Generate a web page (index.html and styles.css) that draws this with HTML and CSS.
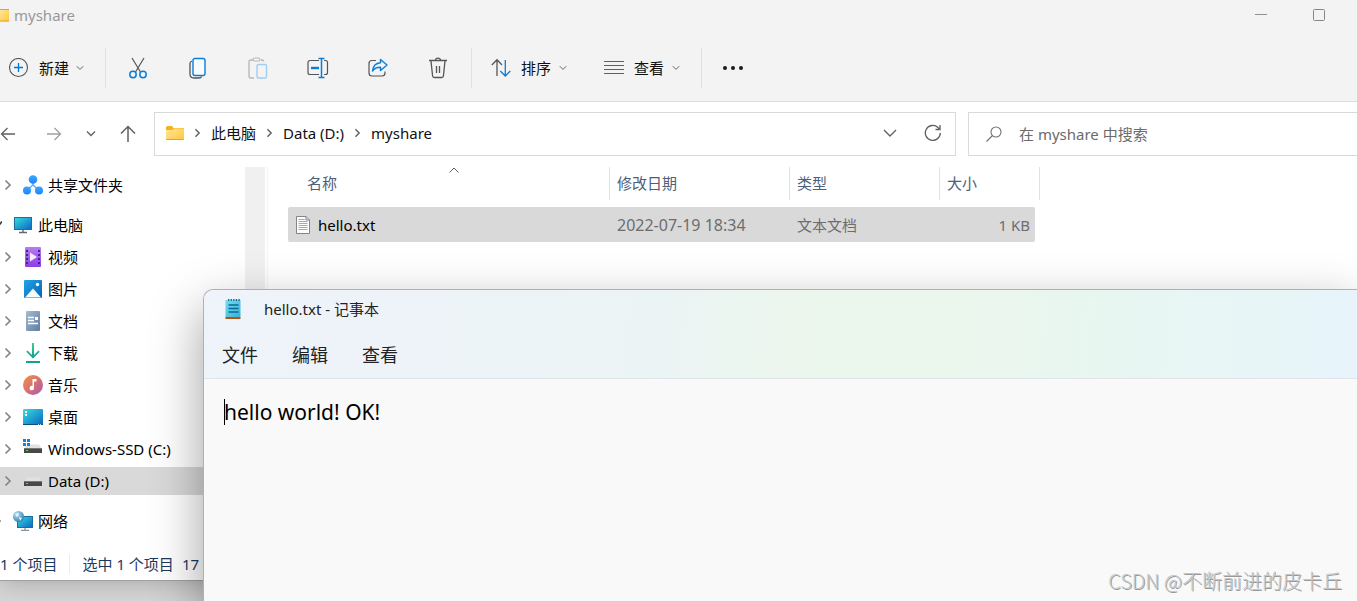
FILE: index.html
```html
<!DOCTYPE html>
<html lang="zh-CN">
<head>
<meta charset="utf-8">
<title>myshare</title>
<link rel="stylesheet" href="styles.css">
</head>
<body>
<svg class="defs" width="0" height="0" aria-hidden="true">
  <defs>
    <linearGradient id="g-folder" x1="0" y1="0" x2="1" y2="1"><stop offset="0" stop-color="#ffe69a"/><stop offset="1" stop-color="#ffc83d"/></linearGradient>
    <linearGradient id="g-screen" x1="0" y1="0" x2="1" y2="1"><stop offset="0" stop-color="#35dde0"/><stop offset="1" stop-color="#0a66c2"/></linearGradient>
    <linearGradient id="g-share" x1="0" y1="0" x2="0" y2="1"><stop offset="0" stop-color="#3ba6ff"/><stop offset="1" stop-color="#1c84ff"/></linearGradient>
    <linearGradient id="g-video" x1="0" y1="0" x2="0" y2="1"><stop offset="0" stop-color="#b77cf2"/><stop offset="1" stop-color="#8a3ee6"/></linearGradient>
    <linearGradient id="g-pic" x1="0" y1="0" x2="1" y2="1"><stop offset="0" stop-color="#1fa5e8"/><stop offset="1" stop-color="#0963b4"/></linearGradient>
    <linearGradient id="g-doc" x1="0" y1="0" x2="1" y2="1"><stop offset="0" stop-color="#a6bbd0"/><stop offset="1" stop-color="#5e7da3"/></linearGradient>
    <linearGradient id="g-down" x1="0" y1="0" x2="0" y2="1"><stop offset="0" stop-color="#36cf94"/><stop offset="1" stop-color="#0a9d94"/></linearGradient>
    <linearGradient id="g-music" x1="0" y1="0" x2="1" y2="1"><stop offset="0" stop-color="#f0954f"/><stop offset=".5" stop-color="#d9706e"/><stop offset="1" stop-color="#a05cc0"/></linearGradient>
    <linearGradient id="g-note" x1="0" y1="0" x2="1" y2="1"><stop offset="0" stop-color="#74dcf3"/><stop offset="1" stop-color="#39b0d8"/></linearGradient>
    <radialGradient id="g-globe" cx=".35" cy=".3" r=".8"><stop offset="0" stop-color="#b9e3f5"/><stop offset="1" stop-color="#2478aa"/></radialGradient>
    <symbol id="chev-r" viewBox="0 0 8 12"><path d="M1.500 1.500 6 6 1.500 10.500" fill="none" stroke="currentColor" stroke-width="1.700"/></symbol>
    <symbol id="chev-d" viewBox="0 0 8 6"><path d="M.8 1.200 4 4.400 7.200 1.200" fill="none" stroke="currentColor"/></symbol>
    <symbol id="drive" viewBox="0 0 20 20"><path d="M4 7.500h12l2.500 4h-17z" fill="#dfe1e4"/><rect x="1" y="11" width="18" height="5" fill="#484848"/><path d="M1 11.500h18" stroke="#777"/><rect x="3" y="13" width="2" height="1" fill="#4be04b"/></symbol>
  </defs>
</svg>

<main class="explorer">
  <header class="chrome">
    <div class="titlebar">
      <svg class="title-icon" viewBox="0 0 9 13"><rect width="9" height="12" y="0.500" fill="url(#g-folder)"/><path d="M0 .5h9M0 12h9" stroke="#e5a41a"/></svg>
      <h1 class="title">myshare</h1>
      <div class="window-buttons">
        <button class="window-button" aria-label="最小化"><svg width="12" height="12"><path d="M0 5.500h12" stroke="#909090"/></svg></button>
        <button class="window-button" aria-label="最大化"><svg width="12" height="12"><rect x=".5" y=".5" width="11" height="11" rx="1" fill="none" stroke="#868686"/></svg></button>
      </div>
    </div>
    <div class="toolbar">
      <button class="command command-new">
        <svg class="icon" viewBox="0 0 20 20" fill="none"><circle cx="9.500" cy="9.500" r="9" stroke="#555" stroke-width="1.100"/><path d="M9.500 5v9M5 9.500h9" stroke="#0078d4" stroke-width="1.300"/></svg>
        <span class="label-new">新建</span><svg class="drop"><use href="#chev-d"/></svg>
      </button>
      <div class="tools">
        <button class="tool" aria-label="剪切"><svg class="icon-lg" viewBox="0 0 22 22" fill="none"><path d="M5 1l8.500 14M17 1 8.500 15" stroke="#555" stroke-width="1.200"/><circle cx="6" cy="17.500" r="3.200" stroke="#0a7ed6" stroke-width="1.500"/><circle cx="16" cy="17.500" r="3.200" stroke="#0a7ed6" stroke-width="1.500"/></svg></button>
        <button class="tool" aria-label="复制"><svg class="icon-lg" viewBox="0 0 22 22" fill="none"><path d="M5 4c-1.200.4-2 1.200-2 2.500V17c0 2.500 1.500 4 4 4h5c1.300 0 2.200-.6 2.600-1.500" stroke="#555" stroke-width="1.300"/><rect x="6" y="1.500" width="12" height="17" rx="2" fill="#f8fbff" stroke="#0a7ed6" stroke-width="1.400"/></svg></button>
        <button class="tool" aria-label="粘贴" disabled><svg class="icon-lg" viewBox="0 0 22 22" fill="none"><path d="M6 3H4a2 2 0 0 0-2 2v14a2 2 0 0 0 2 2h3M14 3h1a1.500 1.500 0 0 1 1.500 1.500" stroke="#b8b8b8" stroke-width="1.400"/><rect x="6" y="1" width="7" height="3" rx="1.500" stroke="#b8b8b8" stroke-width="1.200"/><rect x="10" y="7.500" width="9.500" height="13.500" rx="1.500" stroke="#a3cdee" stroke-width="1.400"/></svg></button>
        <button class="tool" aria-label="重命名"><svg class="icon-lg" viewBox="0 0 22 22" fill="none"><path d="M12 3.500H3a2 2 0 0 0-2 2v10a2 2 0 0 0 2 2h9M17 3.500h1.500a2 2 0 0 1 2 2v10a2 2 0 0 1-2 2H17" stroke="#555" stroke-width="1.200"/><path d="M4 11h8" stroke="#0a7ed6" stroke-width="2.400"/><path d="M14.500 1.500v19M11.500 1.500h6M11.500 20.500h6" stroke="#0a7ed6" stroke-width="1.500"/></svg></button>
        <button class="tool" aria-label="共享"><svg class="icon-lg" viewBox="0 0 22 22" fill="none"><path d="M9 3.500H5a3 3 0 0 0-3 3V16a3 3 0 0 0 3 3h10a3 3 0 0 0 3-3v-1.500" stroke="#555" stroke-width="1.200"/><path d="M13.500 2.500 20 8l-6.500 5.500v-3.300C10 10.200 7.500 11 5.500 14 6 9.500 8.500 6 13.500 5.700z" stroke="#0a7ed6" stroke-width="1.400" stroke-linejoin="round"/></svg></button>
        <button class="tool" aria-label="删除"><svg class="icon-lg" viewBox="0 0 22 22" fill="none" stroke="#555" stroke-width="1.300"><path d="M2 3.500h18M4 4l1.600 15c.1 1 .8 1.500 1.600 1.500h7.600c.8 0 1.500-.5 1.600-1.500L18 4M9.500 9v7M12.500 9v7M8.500 3.300c.2-2.800 4.800-2.800 5 0"/></svg></button>
      </div>
      <div class="menus">
        <button class="command">
          <svg class="icon" viewBox="0 0 20 20" fill="none" stroke-width="1.300"><path d="M6 18V2M.8 7 6 1.800 11 7" stroke="#555"/><path d="M14.300 2v16M9.300 13l5 5 5-5" stroke="#0a7ed6"/></svg>
          <span>排序</span><svg class="drop"><use href="#chev-d"/></svg>
        </button>
        <button class="command">
          <svg class="icon" viewBox="0 0 20 20"><path d="M0 3.500h20M0 7.500h20M0 11.500h20M0 15.500h20" stroke="#606060" stroke-width="1.100"/></svg>
          <span>查看</span><svg class="drop"><use href="#chev-d"/></svg>
        </button>
      </div>
      <button class="more" aria-label="查看更多"><svg width="22" height="6"><circle cx="3" cy="3" r="2" fill="#1b1b1b"/><circle cx="11" cy="3" r="2" fill="#1b1b1b"/><circle cx="19" cy="3" r="2" fill="#1b1b1b"/></svg></button>
    </div>
  </header>

  <div class="address-row">
    <nav class="history" aria-label="导航">
      <button class="nav-button" aria-label="后退"><svg width="16" height="14" fill="none" stroke="#606060" stroke-width="1.300"><path d="M15 7H1.500M7.500 1 1.500 7l6 6"/></svg></button>
      <button class="nav-button forward" aria-label="前进"><svg width="16" height="14" fill="none" stroke="#a0a0a0" stroke-width="1.300"><path d="M1 7h13.500M8.500 1l6 6-6 6"/></svg></button>
      <button class="nav-button recent" aria-label="最近位置"><svg width="10" height="8" fill="none" stroke="#606060" stroke-width="1.300"><path d="M1 1.500l4 4 4-4"/></svg></button>
      <button class="nav-button" aria-label="向上"><svg width="16" height="18" fill="none" stroke="#606060" stroke-width="1.500"><path d="M8 17V1.500M1 8.500l7-7 7 7"/></svg></button>
    </nav>
    <div class="address">
      <svg class="folder" viewBox="0 0 18 14"><path d="M0 1.500Q0 0 1.500 0H6l1.500 2H18v8H0z" fill="#f5b21a"/><path d="M0 4h6.500L8 2.500h10V13a1 1 0 0 1-1 1H1a1 1 0 0 1-1-1z" fill="url(#g-folder)"/><path d="M.5 13.500h17" stroke="#e5a41a"/></svg>
      <svg class="crumb-sep"><use href="#chev-r"/></svg><a class="crumb" href="#">此电脑</a>
      <svg class="crumb-sep"><use href="#chev-r"/></svg><a class="crumb" href="#">Data (D:)</a>
      <svg class="crumb-sep"><use href="#chev-r"/></svg><a class="crumb" href="#">myshare</a>
      <div class="address-actions">
        <button class="nav-button" aria-label="历史记录"><svg width="14" height="10" fill="none" stroke="#606060" stroke-width="1.300"><path d="M1 2l6 6 6-6"/></svg></button>
        <button class="nav-button" aria-label="刷新"><svg width="18" height="18" fill="none" stroke="#606060" stroke-width="1.300"><path d="M16.300 9A7.500 7.500 0 1 1 14 3.500L16 5.200M16 1v4.500h-4.500"/></svg></button>
      </div>
    </div>
    <label class="search">
      <svg width="16" height="16" fill="none" stroke="#707070" stroke-width="1.100"><circle cx="10" cy="6" r="5"/><path d="M6.500 9.500.5 15.500"/></svg>
      <input class="search-input" type="text" placeholder="在 myshare 中搜索" aria-label="在 myshare 中搜索">
    </label>
  </div>

  <div class="content">
    <ul class="tree">
      <li class="node apart-after"><svg class="expand"><use href="#chev-r"/></svg><svg class="icon" viewBox="0 0 20 20"><path d="M10 5v5l-6 5M10 10l6 5" fill="none" stroke="#55acff" stroke-width="1.500"/><circle cx="10" cy="4.500" r="4.300" fill="url(#g-share)"/><circle cx="4" cy="15.500" r="4" fill="url(#g-share)"/><circle cx="16" cy="15.500" r="4" fill="url(#g-share)"/></svg><span>共享文件夹</span></li>
      <li class="node root"><svg class="expand" viewBox="0 0 8 12"><path d="M1 3.500l3 4 4-5" fill="none" stroke="#333" stroke-width="1.600"/></svg><svg class="icon" viewBox="0 0 20 20"><rect x="1.500" y="2.500" width="17" height="12" fill="url(#g-screen)" stroke="#16709a"/><path d="M10 15v3M6 17.500h8" stroke="#667" stroke-width="1.400"/></svg><span>此电脑</span></li>
      <li class="node"><svg class="expand"><use href="#chev-r"/></svg><svg class="icon" viewBox="0 0 20 20"><rect x="2" width="16" height="20" rx="1" fill="url(#g-video)"/><path d="M4 3v16M16 3v16" stroke="#47208a" stroke-width="2" stroke-dasharray="2 2"/><path d="M7 5.500v9l7-4.500z" fill="#f5edff"/></svg><span>视频</span></li>
      <li class="node"><svg class="expand"><use href="#chev-r"/></svg><svg class="icon" viewBox="0 0 20 20"><rect x="1" y="1" width="18" height="18" rx="1" fill="url(#g-pic)"/><path d="M2 18.500 10 9.500l8 9z" fill="#f4fbff"/><circle cx="14.500" cy="5.500" r="1.700" fill="#fff"/></svg><span>图片</span></li>
      <li class="node"><svg class="expand"><use href="#chev-r"/></svg><svg class="icon" viewBox="0 0 20 20"><rect x="3" width="14" height="20" rx="1" fill="url(#g-doc)"/><path d="M5 6.500h6M5 9.500h6M5 12.500h10" stroke="#fff" stroke-width="1.300"/><rect x="12" y="6" width="3" height="3" fill="#fff"/></svg><span>文档</span></li>
      <li class="node"><svg class="expand"><use href="#chev-r"/></svg><svg class="icon" viewBox="0 0 20 20" fill="none"><path d="M9 0h2v12l4.500-4.500 1.200 1.200L10 15.500 3.300 8.700l1.200-1.200L9 12z" fill="url(#g-down)"/><rect x="3" y="18" width="14" height="2" fill="#0ea58e"/></svg><span>下载</span></li>
      <li class="node"><svg class="expand"><use href="#chev-r"/></svg><svg class="icon" viewBox="0 0 20 20"><circle cx="10" cy="10" r="10" fill="url(#g-music)"/><path d="M9.500 4h4v2.500h-2.500v6.500a2.200 2.200 0 1 1-1.500-2z" fill="#fff"/></svg><span>音乐</span></li>
      <li class="node"><svg class="expand"><use href="#chev-r"/></svg><svg class="icon" viewBox="0 0 20 20"><rect y="2" width="20" height="16" rx="1" fill="url(#g-screen)"/><path d="M0 17.500h20" stroke="#084f86"/><path d="M15 17.500h4" stroke="#cde" stroke-dasharray="1 1"/><path d="M2 5h2M2 8h2" stroke="#fff" stroke-width="2"/></svg><span>桌面</span></li>
      <li class="node"><svg class="expand"><use href="#chev-r"/></svg><svg class="icon" viewBox="0 0 20 20"><use href="#drive" y="-2"/><path d="M0 0h3v3H0zM4 0h3v3H4zM0 4h3v3H0zM4 4h3v3H4z" fill="#1683d8"/></svg><span>Windows-SSD (C:)</span></li>
      <li class="node selected apart-after"><svg class="expand"><use href="#chev-r"/></svg><svg class="icon" viewBox="0 0 20 20"><use href="#drive" y="-1"/></svg><span>Data (D:)</span></li>
      <li class="node root"><svg class="expand"><use href="#chev-r"/></svg><svg class="icon" viewBox="0 0 20 20"><rect x="4.500" y="5.500" width="15" height="11" fill="url(#g-screen)" stroke="#16709a"/><path d="M12 17v2M8 19.500h8" stroke="#8894a0" stroke-width="1.300"/><circle cx="5.500" cy="5.500" r="5.500" fill="url(#g-globe)"/><path d="M2 3l3-1 1 2-2 2zM6 6l3 1-2 3z" fill="#e3f4fb"/></svg><span>网络</span></li>
    </ul>
    <div class="scrollbar"></div>
    <section class="files">
      <table class="file-table">
        <colgroup><col class="col-name"><col class="col-date"><col class="col-type"><col class="col-size"><col class="col-end"></colgroup>
        <thead>
          <tr><th class="name-head">名称<svg class="sorted" width="10" height="6"><path d="M.5 5.500 5 1l4.500 4.500" fill="none" stroke="#606060"/></svg></th><th>修改日期</th><th>类型</th><th colspan="2">大小</th></tr>
        </thead>
        <tbody>
          <tr><td class="file-name"><div class="file"><svg width="14" height="18"><path d="M.5.5h9.500l3.500 3.500v13.500H.5z" fill="#fbfbfb" stroke="#858585"/><path d="M10 .5V4h3.500" fill="none" stroke="#858585"/><path d="M2.500 3.500h6M2.500 5.500h9M2.500 7.500h9M2.500 9.500h9M2.500 11.500h9M2.500 13.500h9" stroke="#aaa"/></svg>hello.txt</div></td><td class="date">2022-07-19 18:34</td><td>文本文档</td><td class="size">1 KB</td><td class="end"></td></tr>
        </tbody>
      </table>
    </section>
  </div>

  <footer class="status"><span class="status-item">1 个项目</span><span class="status-item">选中 1 个项目</span><span>17</span></footer>
</main>

<section class="notepad">
  <header class="notepad-head">
    <div class="notepad-title">
      <svg class="icon" viewBox="0 0 20 20"><rect x="2.500" y="1" width="15" height="17" fill="url(#g-note)"/><rect x="2.500" y="18" width="15" height="2" fill="#b4530c"/><path d="M5 .8h12" stroke="#155a78" stroke-width="1.700" stroke-dasharray="1.300 1.300"/><path d="M5.500 6h10M5.500 9.500h10M5.500 13h10" stroke="#0a6a96" stroke-width="1.500"/></svg>
      <h2 class="title-text">hello.txt - 记事本</h2>
    </div>
    <nav class="notepad-menu"><button class="menu-item">文件</button><button class="menu-item">编辑</button><button class="menu-item">查看</button></nav>
  </header>
  <div class="editor">
    <textarea class="editor-text" aria-label="文本编辑器" spellcheck="false">hello world! OK!</textarea>
    <span class="caret"></span>
  </div>
  <p class="watermark">CSDN @不断前进的皮卡丘</p>
</section>
</body>
</html>
```

FILE: styles.css
```css
* { box-sizing: border-box; }

body {
  position: relative;
  margin: 0;
  min-height: 100vh;
  overflow: hidden;
  background: #d6d6d6;
  font: 15px/20px "Noto Sans", "Noto Sans CJK SC", sans-serif;
  color: #111;
}

svg { display: block; flex: none; }
.defs { position: absolute; }
h1, h2, p, ul { margin: 0; padding: 0; font-weight: 400; font-size: inherit; }
button {
  display: flex;
  align-items: center;
  justify-content: center;
  padding: 0;
  border: 0;
  background: none;
  font: inherit;
  color: inherit;
}

.icon { width: 20px; height: 20px; }
.icon-lg { width: 22px; height: 22px; }

/* Explorer window */
.explorer {
  background: #fff;
  border-bottom: 1px solid #a0a0a0;
  box-shadow: 0 0 24px rgba(0, 0, 0, .25);
}
.chrome { background: #f3f3f3; border-bottom: 1px solid #dedede; }
.titlebar { display: flex; align-items: center; height: 30px; }
.title-icon { width: 9px; height: 13px; }
.title { margin-left: 5px; color: #999; }
.window-buttons { display: flex; margin-left: auto; padding-right: 9px; }
.window-button { width: 58px; height: 30px; }

.toolbar { display: flex; align-items: center; height: 71px; padding: 5px 0 0 9px; }
.command { gap: 9px; height: 40px; }
.command .drop { margin-left: -2px; }
.command-new { padding-right: 21px; border-right: 1px solid #e0e0e0; }
.label-new { margin-left: 1px; }
.drop { width: 8px; height: 6px; color: #666; }
.tools { display: flex; padding: 0 3px 0 2px; border-right: 1px solid #e0e0e0; }
.tool { width: 60px; height: 40px; }
.menus { display: flex; gap: 37px; padding: 0 21px 0 19px; border-right: 1px solid #e0e0e0; }
.menus .command { gap: 10px; }
.more { width: 62px; height: 40px; }

/* Address bar */
.address-row { display: flex; gap: 12px; padding: 10px 0 11px; }
.history { display: flex; align-items: center; width: 142px; }
.forward { margin-left: 30px; }
.recent { margin: 0 24px; }
.address {
  flex: 1;
  display: flex;
  align-items: center;
  height: 44px;
  padding: 0 13px 2px 11px;
  border: 1px solid #d9d9d9;
}
.folder { width: 18px; height: 14px; }
.crumb { color: #111; text-decoration: none; }
.crumb-sep { width: 7px; height: 10px; margin: 0 10px; color: #606060; }
.address-actions { display: flex; gap: 27px; margin-left: auto; }
.search {
  display: flex;
  align-items: center;
  gap: 17px;
  width: 389px;
  padding-left: 17px;
  border: 1px solid #d9d9d9;
  border-right: 0;
}
.search-input {
  flex: 1;
  min-width: 0;
  padding: 0;
  border: 0;
  outline: 0;
  background: none;
  font: inherit;
}
.search-input::placeholder { color: #6b6b6b; opacity: 1; }

/* Folder tree */
.content { display: flex; }
.tree {
  display: flex;
  flex-direction: column;
  gap: 4px;
  width: 245px;
  padding: 4px 0 14px;
  overflow: hidden;
  list-style: none;
}
.node { display: flex; align-items: center; gap: 5px; height: 28px; padding-left: 4px; color: #000; }
.root { margin-left: -10px; }
.apart-after { margin-bottom: 8px; }
.selected { background: #d9d9d9; }
.expand { width: 8px; height: 12px; margin-right: 6px; color: #858585; }
.scrollbar { width: 20px; margin-right: 2px; background: #f0f0f0; }

/* File list */
.files { flex: 1; padding-left: 20px; border-left: 1px solid #f4f4f4; }
.file-table { width: 752px; table-layout: fixed; border-spacing: 0; }
.col-name { width: 322px; }
.col-date { width: 180px; }
.col-type { width: 150px; }
.col-size { width: 95px; }
.col-end { width: 5px; }
th {
  height: 33px;
  padding: 0 0 2px 7px;
  border-right: 1px solid #e2e2e2;
  font-weight: 400;
  text-align: left;
  color: #4c607a;
}
.name-head { position: relative; padding-left: 19px; }
.sorted { position: absolute; top: 0; left: 161px; }
thead::after { content: ""; display: block; height: 7px; }
td { height: 35px; padding: 0 0 0 7px; background: #d9d9d9; color: #6d6d6d; }
.date { font-size: 16px; }
.file-name { padding-left: 8px; border-radius: 2px 0 0 2px; color: #000; }
.file { display: flex; align-items: center; gap: 8px; }
.size { padding: 0 5px 0 0; border-radius: 0 2px 2px 0; text-align: right; }
.end { padding: 0; background: none; }

.status { display: flex; height: 31px; align-items: center; padding-bottom: 2px; color: #1e395b; }
.status-item + .status-item { margin: 0 8px 0 12px; }
.status-item:first-child { padding-right: 12px; border-right: 1px solid #eee; }

/* Notepad window, stacked over the explorer */
.notepad {
  position: absolute;
  inset: 289px 0 0 203px;
  display: flex;
  flex-direction: column;
  border: 1px solid #b0b0b0;
  border-width: 1px 0 0 1px;
  border-radius: 10px 0 0 0;
  background: #f9f9f9;
  box-shadow: 0 20px 52px rgba(0, 0, 0, .38);
}
.notepad-head {
  padding-left: 18px;
  border-bottom: 1px solid #dfe5e8;
  border-radius: 10px 0 0 0;
  background: linear-gradient(95deg, #eff3fa 0%, #edf3f8 20%, #ebf4f4 40%, #ecf6ee 50%, #ebf6ed 66%, #e8f6f1 78%, #e7f5f8 94%, #e8f3fb 100%);
}
.notepad-title { display: flex; align-items: center; gap: 21px; height: 38px; padding-left: 1px; }
.notepad-menu { display: flex; gap: 34px; height: 50px; }
.menu-item { padding-top: 3px; font-size: 18px; color: #222; }
.title-text { color: #222; }
.editor { position: relative; flex: 1; display: flex; }
.editor-text {
  flex: 1;
  padding: 19px 0 0 20px;
  border: 0;
  outline: 0;
  resize: none;
  background: none;
  font: 21px/28px "Noto Sans", "Noto Sans CJK SC", sans-serif;
  color: #000;
}
.caret { position: absolute; top: 20px; left: 20px; width: 1px; height: 26px; background: #000; }
.watermark {
  position: absolute;
  right: 15px;
  bottom: 8px;
  font: 300 20px/24px "Noto Sans CJK SC", sans-serif;
  color: #c6c6c6;
  text-shadow: 1px 1px 0 #999;
}
```
